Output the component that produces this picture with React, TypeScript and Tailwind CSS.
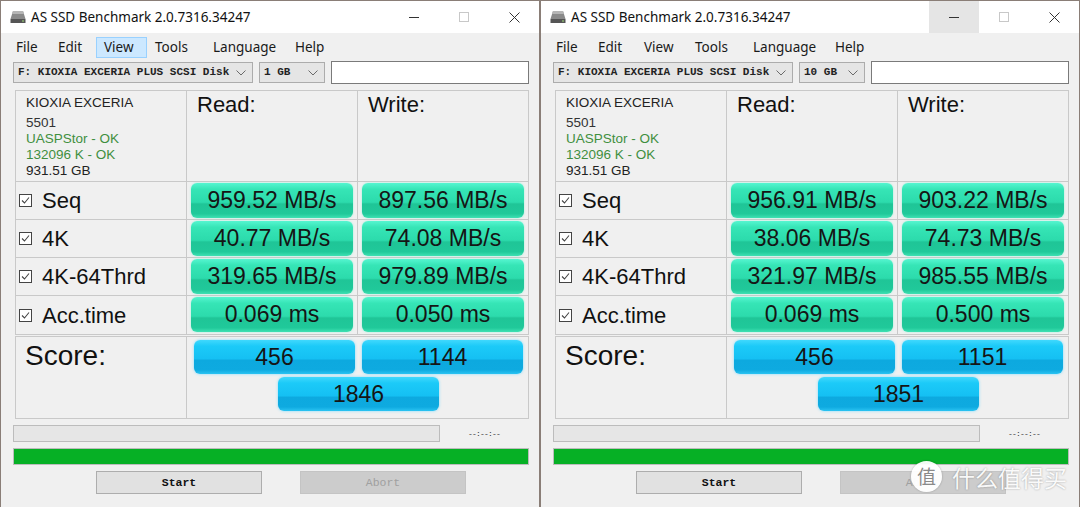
import React from "react";

type WinData = {
  size: string;
  rows: { label: string; r: string; w: string }[];
  score: [string, string, string];
  viewHot?: boolean;
  minHover?: boolean;
};

const left: WinData = {
  size: "1 GB",
  viewHot: true,
  rows: [
    { label: "Seq", r: "959.52 MB/s", w: "897.56 MB/s" },
    { label: "4K", r: "40.77 MB/s", w: "74.08 MB/s" },
    { label: "4K-64Thrd", r: "319.65 MB/s", w: "979.89 MB/s" },
    { label: "Acc.time", r: "0.069 ms", w: "0.050 ms" },
  ],
  score: ["456", "1144", "1846"],
};

const right: WinData = {
  size: "10 GB",
  minHover: true,
  rows: [
    { label: "Seq", r: "956.91 MB/s", w: "903.22 MB/s" },
    { label: "4K", r: "38.06 MB/s", w: "74.73 MB/s" },
    { label: "4K-64Thrd", r: "321.97 MB/s", w: "985.55 MB/s" },
    { label: "Acc.time", r: "0.069 ms", w: "0.500 ms" },
  ],
  score: ["456", "1151", "1851"],
};

function Chevron() {
  return (
    <svg width="10" height="6" viewBox="0 0 10 6" className="shrink-0">
      <path d="M0.5 0.5 L5 5 L9.5 0.5" fill="none" stroke="#6a6a6a" strokeWidth="1" />
    </svg>
  );
}

function CheckBox() {
  return (
    <svg width="13" height="13" viewBox="0 0 13 13" className="shrink-0">
      <rect x="0.5" y="0.5" width="12" height="12" fill="#fff" stroke="#444" strokeWidth="1" />
      <path d="M3 6.5 L5.5 9 L10 3.5" fill="none" stroke="#444" strokeWidth="1.1" />
    </svg>
  );
}

function DriveIcon() {
  return (
    <svg width="16" height="14" viewBox="0 0 16 14" className="shrink-0">
      <path d="M3 1 H13 L15.5 9 H0.5 Z" fill="#8a8a8a" />
      <path d="M3 1 H13 L14 4 H2 Z" fill="#b5b5b5" />
      <rect x="0.5" y="9" width="15" height="4" fill="#555" />
      <rect x="12" y="10.5" width="2" height="1" fill="#9fdc7a" />
    </svg>
  );
}

function GreenBtn({ v }: { v: string }) {
  return (
    <div className="h-[35px] w-full rounded-[6px] flex items-center justify-center text-[23px] text-[#151515] font-['Liberation_Sans',Arial,sans-serif] bg-[linear-gradient(to_bottom,#55f5d0_0%,#36e5b6_18%,#2cdbac_55%,#1fc597_60%,#20c99a_88%,#3fe1b3_100%)] shadow-[0_0_2px_#8ef3d8]">
      {v}
    </div>
  );
}

function BlueBtn({ v }: { v: string }) {
  return (
    <div className="h-[34px] w-[161px] rounded-[6px] flex items-center justify-center text-[23px] text-[#151515] font-['Liberation_Sans',Arial,sans-serif] bg-[linear-gradient(to_bottom,#40d8fd_0%,#1ccaf8_18%,#15c0f3_55%,#0da9df_60%,#0eaae0_88%,#2ac3f2_100%)] shadow-[0_0_3px_#7fdcff]">
      {v}
    </div>
  );
}

function Window({ d }: { d: WinData }) {
  const menu: [string, number][] = [
    ["File", 42],
    ["Edit", 46],
    ["View", 51],
    ["Tools", 58],
    ["Language", 82],
    ["Help", 45],
  ];
  return (
    <div className="w-[540px] h-[507px] shrink-0 flex flex-col bg-[#f0f0f0] border-l border-r border-t border-[#8a7e77] overflow-hidden font-['Noto_Sans',sans-serif] text-[#1a1a1a]">
      {/* title bar */}
      <div className="h-[32px] bg-white flex items-center shrink-0">
        <div className="pl-[9px] pr-[5px] flex items-center">
          <DriveIcon />
        </div>
        <div className="text-[13.5px] text-[#111]">AS SSD Benchmark 2.0.7316.34247</div>
        <div className="ml-auto flex h-full">
          <div className={`w-[50px] h-full flex items-center justify-center ${d.minHover ? "bg-[#e5e5e5]" : ""}`}>
            <div className="w-[10px] h-px bg-[#333]" />
          </div>
          <div className="w-[50px] h-full flex items-center justify-center">
            <div className="w-[10px] h-[10px] border border-[#c8c8c8]" />
          </div>
          <div className="w-[50px] h-full flex items-center justify-center">
            <svg width="11" height="11" viewBox="0 0 11 11">
              <path d="M0.5 0.5 L10.5 10.5 M10.5 0.5 L0.5 10.5" stroke="#333" strokeWidth="1" />
            </svg>
          </div>
        </div>
      </div>

      {/* menu */}
      <div className="mt-[4px] h-[21px] flex pl-[7px] shrink-0 text-[13.5px]">
        {menu.map(([m, w]) => (
          <div
            key={m}
            style={{ width: w }}
            className={`h-full flex items-center pl-[7px] border ${
              m === "View" && d.viewHot ? "bg-[#cce8ff] border-[#99d1ff]" : "border-transparent"
            }`}
          >
            {m}
          </div>
        ))}
      </div>

      {/* selectors */}
      <div className="mt-[3px] h-[23px] flex items-center gap-[6px] pl-[12px] shrink-0 font-['Liberation_Mono',monospace] text-[11px] font-bold text-[#222]">
        <div className="w-[240px] h-[21px] bg-[#e5e5e5] border border-[#acacac] flex items-center pl-[4px] pr-[6px]">
          <span className="flex-1 whitespace-pre">F: KIOXIA EXCERIA PLUS SCSI Disk</span>
          <Chevron />
        </div>
        <div className="w-[66px] h-[21px] bg-[#e5e5e5] border border-[#acacac] flex items-center pl-[4px] pr-[6px]">
          <span className="flex-1 whitespace-pre">{d.size}</span>
          <Chevron />
        </div>
        <div className="w-[198px] h-[23px] bg-white border border-[#7a7a7a]" />
      </div>

      {/* results grid */}
      <div className="mt-[6px] ml-[14px] w-[514px] border border-[#c9c9c9] shrink-0 font-['Liberation_Sans',Arial,sans-serif]">
        <div className="h-[91px] flex border-b border-[#c9c9c9]">
          <div className="w-[171px] border-r border-[#c9c9c9] pl-[10px] pt-[4px] leading-[16px] text-[13.5px]">
            <div className="text-[13.5px] mb-[4px] text-[#222]">KIOXIA EXCERIA</div>
            <div className="text-[#333]">5501</div>
            <div className="text-[#3f8f3f]">UASPStor - OK</div>
            <div className="text-[#3f8f3f]">132096 K - OK</div>
            <div className="text-[#222]">931.51 GB</div>
          </div>
          <div className="w-[171px] border-r border-[#c9c9c9] pl-[10px] pt-[1px] text-[22px] leading-[26px] text-[#111]">
            Read:
          </div>
          <div className="flex-1 pl-[10px] pt-[1px] text-[22px] leading-[26px] text-[#111]">Write:</div>
        </div>
        {d.rows.map((r, i) => (
          <div key={r.label} className={`h-[38px] flex ${i < 3 ? "border-b border-[#c9c9c9]" : ""}`}>
            <div className="w-[171px] border-r border-[#c9c9c9] flex items-center pl-[3px] gap-[10px]">
              <CheckBox />
              <span className="text-[22px] text-[#111]">{r.label}</span>
            </div>
            <div className="w-[171px] border-r border-[#c9c9c9] px-[4px] pt-[1px]">
              <GreenBtn v={r.r} />
            </div>
            <div className="flex-1 px-[4px] pt-[1px]">
              <GreenBtn v={r.w} />
            </div>
          </div>
        ))}
      </div>

      {/* score */}
      <div className="mt-[1px] ml-[14px] w-[514px] h-[83px] border border-[#c9c9c9] flex shrink-0 font-['Liberation_Sans',Arial,sans-serif]">
        <div className="w-[171px] border-r border-[#c9c9c9] pl-[9px] pt-[3px] text-[28px] leading-[32px] text-[#111]">
          Score:
        </div>
        <div className="flex-1 pl-[7px] pt-[3px]">
          <div className="w-[329px] flex flex-col gap-[3px]">
            <div className="flex gap-[7px]">
              <BlueBtn v={d.score[0]} />
              <BlueBtn v={d.score[1]} />
            </div>
            <div className="flex justify-center">
              <BlueBtn v={d.score[2]} />
            </div>
          </div>
        </div>
      </div>

      {/* progress */}
      <div className="mt-[6px] ml-[12px] h-[17px] flex items-center shrink-0">
        <div className="w-[427px] h-[17px] bg-[#e6e6e6] border border-[#bcbcbc]" />
        <div className="ml-[28px] font-['Liberation_Mono',monospace] text-[8px] tracking-[-0.8px] text-[#333]">--:--:--</div>
      </div>
      <div className="mt-[6px] ml-[12px] w-[516px] h-[17px] bg-[#06b025] border border-[#bcbcbc] shrink-0" />

      {/* buttons */}
      <div className="mt-[6px] ml-[95px] flex gap-[38px] shrink-0 font-['Liberation_Mono',monospace] text-[11.5px] font-bold">
        <div className="w-[166px] h-[23px] bg-[#e1e1e1] border border-[#adadad] flex items-center justify-center text-[#111]">
          Start
        </div>
        <div className="w-[166px] h-[23px] bg-[#cccccc] border border-[#c4c4c4] flex items-center justify-center text-[#a0a0a0] font-normal">
          Abort
        </div>
      </div>
    </div>
  );
}

export default function App() {
  return (
    <div className="relative w-[1080px] h-[507px] flex overflow-hidden bg-[#f0f0f0]">
      <Window d={left} />
      <Window d={right} />
      {/* watermark */}
      <div className="absolute left-[911px] top-[461px] flex items-center gap-[10px] pointer-events-none">
        <div className="w-[31px] h-[31px] rounded-full bg-white/95 flex items-center justify-center text-[19px] text-[#8a8a8a] font-['Noto_Sans_CJK_SC',sans-serif] shadow-[0_0_2px_rgba(0,0,0,0.3)]">
          值
        </div>
        <div className="text-[23px] leading-[28px] text-white/95 font-['Noto_Sans_CJK_SC',sans-serif] [text-shadow:0_0_2px_rgba(0,0,0,0.35)]">
          什么值得买
        </div>
      </div>
    </div>
  );
}
